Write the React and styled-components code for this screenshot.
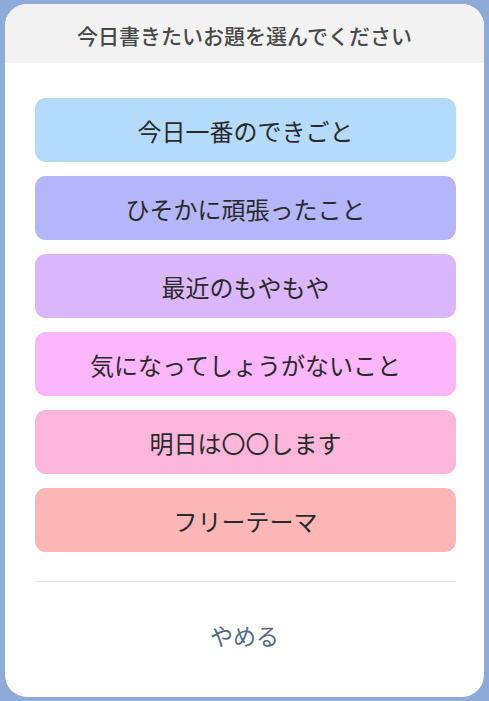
import styled, { createGlobalStyle } from 'styled-components';

const GlobalStyle = createGlobalStyle`
  html, body {
    margin: 0;
    padding: 0;
    background: #8eaad8;
  }
  body {
    font-family: "Noto Sans CJK JP", "Noto Sans", sans-serif;
  }
`;

const Screen = styled.div`
  width: 489px;
  height: 701px;
  padding: 4px 5px;
  box-sizing: border-box;
`;

const Sheet = styled.div`
  height: 693px;
  background: #ffffff;
  border-radius: 22px;
  overflow: hidden;
  display: flex;
  flex-direction: column;
`;

const Header = styled.div`
  height: 59px;
  padding-top: 2px;
  box-sizing: border-box;
  background: #f2f2f2;
  display: flex;
  align-items: center;
  justify-content: center;
  font-size: 21px;
  font-weight: 500;
  color: #484848;
`;

const Choices = styled.div`
  display: flex;
  flex-direction: column;
  gap: 14px;
  padding: 35px 28px 0 30px;
`;

const Choice = styled.button`
  height: 64px;
  border: none;
  border-radius: 11px;
  background: ${(p) => p.$bg};
  font-family: inherit;
  font-size: 24px;
  font-weight: 400;
  color: #2a2a2a;
  display: flex;
  align-items: center;
  justify-content: center;
  padding: 0;
  cursor: pointer;
`;

const Divider = styled.hr`
  margin: 29px 28px 0 30px;
  border: none;
  border-top: 1px solid #e6e8ec;
`;

const Cancel = styled.button`
  flex: 1;
  border: none;
  background: transparent;
  font-family: inherit;
  font-size: 23px;
  color: #566b8a;
  display: flex;
  align-items: flex-start;
  justify-content: center;
  padding-top: 36px;
  cursor: pointer;
`;

const topics = [
  { label: '今日一番のできごと', bg: '#b4dafc' },
  { label: 'ひそかに頑張ったこと', bg: '#b4b6fc' },
  { label: '最近のもやもや', bg: '#dab6fc' },
  { label: '気になってしょうがないこと', bg: '#fcb6fc' },
  { label: '明日は〇〇します', bg: '#fcb6da' },
  { label: 'フリーテーマ', bg: '#fcb6b6' },
];

export default function App() {
  return (
    <Screen>
      <GlobalStyle />
      <Sheet>
        <Header>今日書きたいお題を選んでください</Header>
        <Choices>
          {topics.map((t) => (
            <Choice key={t.label} $bg={t.bg}>{t.label}</Choice>
          ))}
        </Choices>
        <Divider />
        <Cancel>やめる</Cancel>
      </Sheet>
    </Screen>
  );
}
